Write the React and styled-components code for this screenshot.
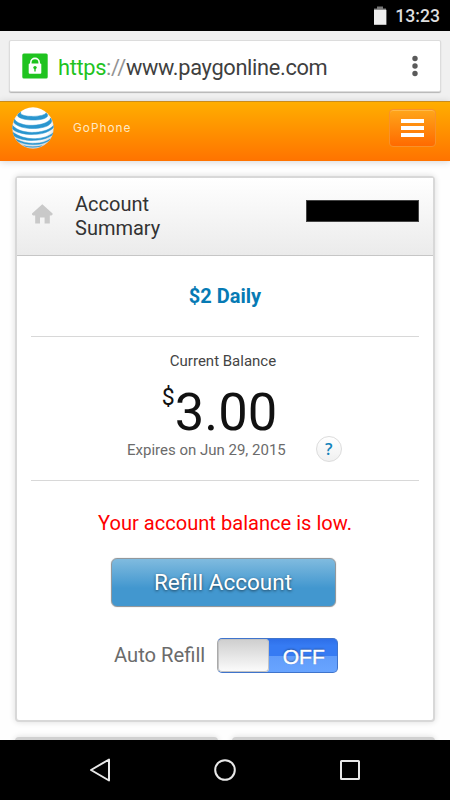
import React, { useState } from 'react';
import styled, { createGlobalStyle } from 'styled-components';

const GlobalStyle = createGlobalStyle`
  * {
    box-sizing: border-box;
  }
  body {
    margin: 0;
    background: #fefefe;
    font-family: Roboto, sans-serif;
  }
`;

const Screen = styled.div`
  display: flex;
  flex-direction: column;
  width: 450px;
  height: 800px;
  overflow: hidden;
  background: #fefefe;
`;

const StatusBar = styled.div`
  display: flex;
  flex: none;
  align-items: center;
  justify-content: flex-end;
  gap: 8px;
  height: 31px;
  padding: 1px 10px 0 0;
  background: #000;
  color: #dedede;
  font-size: 17.6px;
  font-weight: 500;
`;

const BrowserBar = styled.div`
  flex: none;
  height: 70px;
  padding: 10px 10px 0;
  background: #f0f0f0;
`;

const AddressBox = styled.div`
  display: flex;
  align-items: center;
  height: 50px;
  padding: 0 20px 0 12px;
  background: #fff;
  border-radius: 1px;
  box-shadow: 0 0 0 1px #dcdcdc, 0 1px 1px 1px #b4b4b4;
`;

const Lock = styled.svg`
  flex: none;
  margin-right: 10px;
`;

const Url = styled.div`
  flex: 1;
  padding-top: 3px;
  color: #3f3f3f;
  font-size: 21.8px;
  letter-spacing: -0.33px;
  line-height: 30px;
  white-space: nowrap;
`;

const Scheme = styled.span`
  color: ${props => (props.$secure ? '#1fc31f' : '#939393')};
`;

const SiteHeader = styled.header`
  position: relative;
  display: flex;
  flex: none;
  align-items: center;
  height: 60px;
  padding: 0 14px 7px 12px;
  background: linear-gradient(#ffae00, #ff7300);
  border-top: 1px solid #c98c1c;
  box-shadow: 0 1px 7px rgba(0, 0, 0, 0.16);
`;

const Brand = styled.div`
  flex: 1;
  margin-left: 19px;
  color: #ffe9c4;
  font-family: Inter, sans-serif;
  font-size: 11.8px;
  letter-spacing: 1px;
`;

const MenuButton = styled.button`
  display: flex;
  flex-direction: column;
  align-items: center;
  justify-content: center;
  gap: 3px;
  width: 47px;
  height: 38px;
  padding: 0;
  background: linear-gradient(#ffa61a, #ff6a00);
  border: 1px solid #f9912a;
  border-radius: 4px;
  box-shadow: inset 0 1px 0 #ffba4a;
`;

const MenuLine = styled.span`
  width: 23px;
  height: 4px;
  background: #fff;
`;

const Page = styled.main`
  flex: 1;
  min-height: 0;
  padding: 15px 15px 0;
  overflow: hidden;
`;

const Card = styled.section`
  height: 546px;
  background: #fff;
  border: 2px solid #d8d8d8;
  border-radius: 4px;
  box-shadow: 0 0 6px rgba(0, 0, 0, 0.14);
`;

const CardHeader = styled.div`
  display: flex;
  align-items: flex-start;
  height: 78px;
  padding: 0 14px;
  background: linear-gradient(#fff, #ebebeb);
  border-bottom: 1px solid #c6c6c6;
`;

const HomeIcon = styled.svg`
  margin-top: 25px;
`;

const CardTitle = styled.h1`
  flex: 1;
  margin: 14px 0 0 21px;
  color: #333;
  font-size: 20px;
  font-weight: 400;
  line-height: 24px;
`;

const Redacted = styled.div`
  width: 113px;
  height: 22px;
  margin-top: 22px;
  background: #000;
  border: 1px solid #444;
`;

const CardBody = styled.div`
  padding: 0 14px;
  text-align: center;
`;

const Plan = styled.div`
  height: 81px;
  padding-top: 26px;
  color: #067ab4;
  border-bottom: 1px solid #d8d8d8;
  font-size: 20px;
  font-weight: 700;
  line-height: 28px;
`;

const Balance = styled.div`
  height: 144px;
  padding-top: 14px;
  border-bottom: 1px solid #d8d8d8;
`;

const BalanceLabel = styled.div`
  padding-right: 4px;
  color: #444;
  font-size: 15px;
  line-height: 20px;
`;

const Amount = styled.div`
  display: flex;
  align-items: flex-start;
  justify-content: center;
  height: 69px;
  padding-right: 11px;
  color: #111;
  font-size: 52.5px;
  line-height: 82px;
`;

const Currency = styled.span`
  font-size: 23px;
  line-height: 53px;
`;

const Expiry = styled.div`
  display: flex;
  align-items: center;
  height: 20px;
  padding-left: 96px;
  color: #6b6b6b;
  font-size: 15px;
`;

const HelpButton = styled.button`
  width: 26px;
  height: 26px;
  margin: -2px 0 0 30px;
  padding: 0;
  color: #1484bb;
  background: linear-gradient(#fff, #f0f0f0);
  border: 1px solid #dcdcdc;
  border-radius: 50%;
  font-family: "Open Sans", sans-serif;
  font-size: 16.5px;
  font-weight: 600;
  line-height: 22px;
`;

const Warning = styled.div`
  margin-top: 28px;
  color: #f00;
  font-size: 20.1px;
  line-height: 28px;
`;

const RefillButton = styled.button`
  display: block;
  width: 225px;
  height: 49px;
  margin: 21px auto 0 80px;
  padding: 0 1px 1px 0;
  color: #fff;
  background: linear-gradient(#80bbdf, #4297cf 62%, #4297cf);
  border: 1px solid #92989c;
  border-radius: 6px;
  box-shadow: 0 0 1px #999;
  font-family: Roboto, sans-serif;
  font-size: 22.5px;
  text-shadow: 0 1px 3px rgba(0, 0, 0, 0.6);
`;

const AutoRefill = styled.div`
  display: flex;
  align-items: center;
  height: 36px;
  margin-top: 30px;
  padding-left: 83px;
  color: #6b6b6b;
  font-size: 20.2px;
`;

const Toggle = styled.button`
  display: flex;
  flex-direction: ${props => (props.$on ? 'row-reverse' : 'row')};
  width: 121px;
  height: 35px;
  margin-left: 12px;
  padding: 0;
  overflow: hidden;
  background: linear-gradient(#2e6fe8, #367bf3 20%, #367bf3 50%, #609cfa 51%, #68a4ff);
  border: 1px solid #3f74cc;
  border-left-color: #aaa;
  border-radius: 5px;
`;

const Knob = styled.span`
  width: 51px;
  height: 100%;
  background: linear-gradient(#cecece, #fcfcfc);
  box-shadow: inset 0 0 0 1px #c4c4c4;
  border-radius: 4px;
`;

const ToggleLabel = styled.span`
  flex: 1;
  padding-left: 1px;
  color: #fff;
  font-family: "Liberation Sans", sans-serif;
  font-size: 21px;
  line-height: 35px;
  text-shadow: 0 -1px 2px rgba(0, 0, 0, 0.4);
  -webkit-text-stroke: 0.4px #fff;
`;

const NextCards = styled.div`
  display: grid;
  grid-template-columns: 203px 203px;
  gap: 14px;
  margin-top: 15px;
`;

const NextCard = styled.div`
  height: 20px;
  background: #d0d0d0;
  border-radius: 4px;
  box-shadow: 0 0 6px rgba(0, 0, 0, 0.14);
`;

const NavBar = styled.nav`
  position: relative;
  display: flex;
  flex: none;
  align-items: center;
  justify-content: center;
  gap: 101px;
  height: 60px;
  background: #000;
`;

const Battery = () => (
  <svg width="14" height="20" viewBox="0 0 14 20">
    <path d="M4 0.5h6v2h3v2H1v-2h3z" fill="#777" />
    <path d="M1 3.8h12.4v15H1z" fill="#eee" />
  </svg>
);

const Globe = () => (
  <svg width="42" height="42" viewBox="0 0 126 126">
    <defs>
      <radialGradient id="ball" cx="50%" cy="42%" r="58%">
        <stop offset="70%" stopColor="#fff" />
        <stop offset="100%" stopColor="#c9d0d3" />
      </radialGradient>
      <clipPath id="ballClip">
        <circle cx="63" cy="63" r="62" />
      </clipPath>
    </defs>
    <circle cx="63" cy="63" r="62" fill="url(#ball)" />
    <g clipPath="url(#ballClip)" fill="#2a96cf" stroke="#2a96cf" strokeWidth="1.6">
      <path d="M27 14C22 20 30 27 56 28C80 29 101 24 102 17C111 24 108 32 92 36C68 42 32 39 20 30C13 25 18 19 27 14Z" />
      <path d="M7 36C13 48 36 56 62 55C92 54 114 44 116 33C124 44 115 56 94 61C62 69 18 64 5 46Z" />
      <path d="M1 55C14 70 40 78 70 76C96 74 117 66 125 55L125 61C115 73 94 81 72 82C42 84 13 78 1 65Z" />
      <path d="M2 76C22 89 44 96 70 95C94 94 113 87 124 77L121 84C108 93 92 99 71 100C44 102 20 96 5 86Z" />
      <path d="M12 97C33 107 50 110 70 109C88 109 103 104 115 96L111 101C98 108 86 112 70 112.500C50 114 33 110 17 103Z" />
      <path d="M33 115C51 120 72 120 92 115L86 118.500C71 122 53 122 39 118.500Z" strokeWidth="0" />
    </g>
  </svg>
);

export default function App() {
  const [autoRefill, setAutoRefill] = useState(false);

  return (
    <>
      <GlobalStyle />
      <Screen>
        <StatusBar>
          <Battery />
          <span>13:23</span>
        </StatusBar>

        <BrowserBar>
          <AddressBox>
            <Lock width="26" height="26" viewBox="0 0 26 26">
              <rect x="0.3" y="0.6" width="25.4" height="25" rx="1.5" fill="#1fc31f" />
              <path d="M8.8 12V9.6a4.2 4.2 0 0 1 8.4 0V12" fill="none" stroke="#fff" strokeWidth="1.6" />
              <rect x="6.7" y="10.6" width="12.6" height="10.2" rx="1" fill="#fff" />
              <circle cx="13" cy="14.6" r="1.7" fill="#1fc31f" />
              <path d="M12.3 15h1.4v3.4h-1.4z" fill="#1fc31f" />
            </Lock>
            <Url>
              <Scheme $secure>https</Scheme>
              <Scheme>://</Scheme>
              www.paygonline.com
            </Url>
            <svg width="10" height="24" viewBox="0 0 10 24" fill="#5a5a5a">
              <circle cx="5" cy="4.5" r="2.7" />
              <circle cx="5" cy="12" r="2.7" />
              <circle cx="5" cy="19.5" r="2.7" />
            </svg>
          </AddressBox>
        </BrowserBar>

        <SiteHeader>
          <Globe />
          <Brand>GoPhone</Brand>
          <MenuButton>
            <MenuLine />
            <MenuLine />
            <MenuLine />
          </MenuButton>
        </SiteHeader>

        <Page>
          <Card>
            <CardHeader>
              <HomeIcon width="23" height="22" viewBox="0 0 23 22">
                <path
                  d="M11.3 1.2L21.6 10.6Q22 12.4 20.3 12.4H18.8V20.6H13.6V14.6H9V20.6H4.2V12.4H2.2Q0.6 12.4 1 10.6Z"
                  fill="#c9c9c9"
                />
              </HomeIcon>
              <CardTitle>
                Account
                <br />
                Summary
              </CardTitle>
              <Redacted />
            </CardHeader>

            <CardBody>
              <Plan>$2 Daily</Plan>
              <Balance>
                <BalanceLabel>Current Balance</BalanceLabel>
                <Amount>
                  <Currency>$</Currency>
                  3.00
                </Amount>
                <Expiry>
                  Expires on Jun 29, 2015
                  <HelpButton>?</HelpButton>
                </Expiry>
              </Balance>
              <Warning>Your account balance is low.</Warning>
              <RefillButton>Refill Account</RefillButton>
              <AutoRefill>
                Auto Refill
                <Toggle $on={autoRefill} onClick={() => setAutoRefill(!autoRefill)}>
                  <Knob />
                  <ToggleLabel>{autoRefill ? 'ON' : 'OFF'}</ToggleLabel>
                </Toggle>
              </AutoRefill>
            </CardBody>
          </Card>

          <NextCards>
            <NextCard />
            <NextCard />
          </NextCards>
        </Page>

        <NavBar>
          <svg width="24" height="26" viewBox="0 0 24 26" fill="none" stroke="#e8e8e8" strokeWidth="2">
            <path d="M21 2.5V23.5L3 13Z" strokeLinejoin="round" />
          </svg>
          <svg width="24" height="24" viewBox="0 0 24 24" fill="none" stroke="#e8e8e8" strokeWidth="2">
            <circle cx="12" cy="12" r="9.8" />
          </svg>
          <svg width="24" height="24" viewBox="0 0 24 24" fill="none" stroke="#e8e8e8" strokeWidth="2">
            <rect x="3" y="3" width="18" height="18" rx="0.5" />
          </svg>
        </NavBar>
      </Screen>
    </>
  );
}
